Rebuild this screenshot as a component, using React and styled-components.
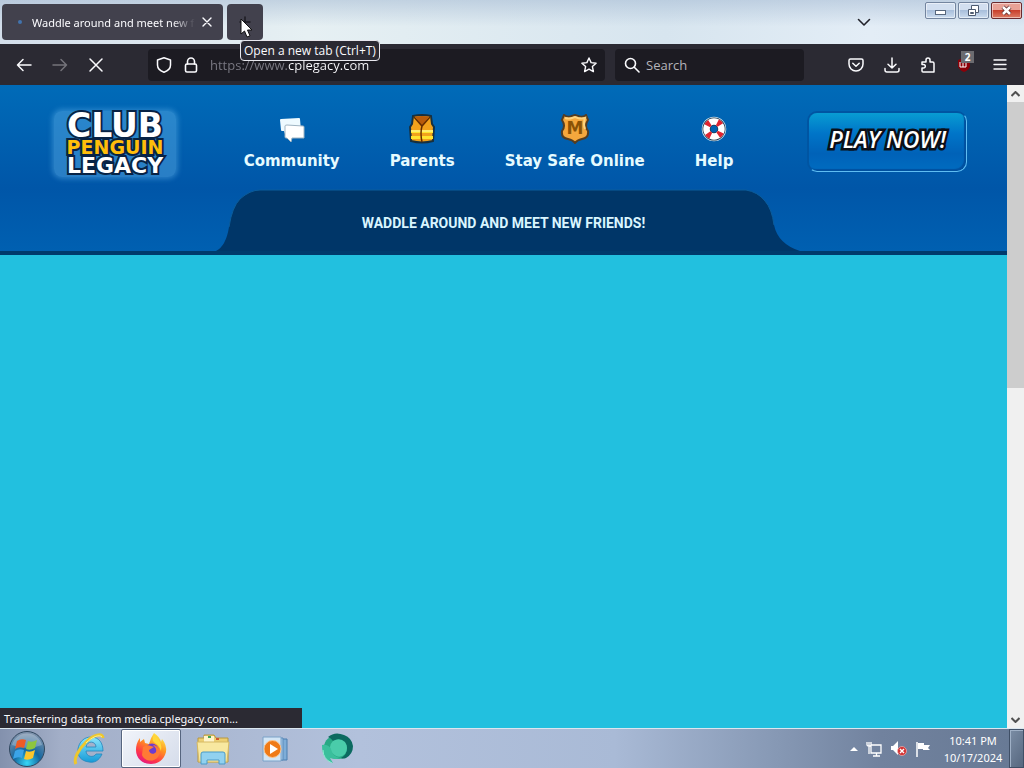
import styled, { createGlobalStyle } from 'styled-components';

const GlobalStyle = createGlobalStyle`
  * {
    box-sizing: border-box;
  }
  html,
  body,
  #root {
    height: 100%;
    margin: 0;
  }
  body {
    font-family: 'Noto Sans', 'Open Sans', sans-serif;
    font-size: 11px;
    overflow: hidden;
  }
  button {
    font: inherit;
    color: inherit;
    border: 0;
    padding: 0;
    background: none;
  }
  svg {
    display: block;
    flex: none;
  }
`;

const Desktop = styled.div`
  height: 100%;
  display: flex;
  flex-direction: column;
`;

/* title bar */
const TabStrip = styled.header`
  height: 44px;
  flex: none;
  display: flex;
  gap: 4px;
  padding: 4px 2px;
  background: linear-gradient(180deg, rgba(160, 182, 208, 0.5), rgba(255, 255, 255, 0) 60%),
    linear-gradient(90deg, #d3deeb, #e6f0f3 30%, #d7e5ef 65%, #e3edf6 85%, #dce8f3);
`;
const Tab = styled.div`
  width: 221px;
  height: 36px;
  display: flex;
  align-items: center;
  padding: 0 8px 0 16px;
  border-radius: 4px;
  background: #42414d;
  color: #fbfbfe;
`;
const TabTitle = styled.span`
  flex: 1;
  margin: 0 4px 0 10px;
  overflow: hidden;
  white-space: nowrap;
  mask-image: linear-gradient(90deg, #000 86%, transparent);
`;
const Loading = styled.span`
  width: 4px;
  height: 4px;
  border-radius: 50%;
  background: #4273ad;
`;
const NewTab = styled.div`
  position: relative;
  width: 36px;
  height: 36px;
  button {
    width: 100%;
    height: 100%;
    border-radius: 4px;
    background: #42414d;
    color: #1c1b22;
    display: flex;
    align-items: center;
    justify-content: center;
  }
`;
const Tooltip = styled.span`
  position: absolute;
  z-index: 3;
  left: 13px;
  top: 36px;
  padding: 0 3px;
  font-family: 'Open Sans', sans-serif;
  font-size: 12px;
  line-height: 19px;
  white-space: nowrap;
  color: #fbfbfe;
  background: #2b2a33;
  border: 1px solid #e8e8ee;
  border-radius: 4px;
`;
const Pointer = styled.svg`
  position: absolute;
  z-index: 4;
  left: 13px;
  top: 14px;
`;
const Spacer = styled.div`
  flex: 1;
`;
const ListTabs = styled.button`
  width: 32px;
  height: 36px;
  display: flex;
  align-items: center;
  justify-content: center;
  margin-right: 41px;
`;
const WindowControls = styled.div`
  display: flex;
  gap: 2px;
  margin-top: -2px;
`;
const WindowButton = styled.button`
  width: 31px;
  height: 17px;
  display: flex;
  align-items: center;
  justify-content: center;
  border: 1px solid ${(p) => (p.$close ? '#6b2a2e' : '#73859f')};
  border-radius: 2px;
  box-shadow: inset 0 0 0 1px rgba(255, 255, 255, 0.5);
  background: ${(p) =>
    p.$close
      ? 'linear-gradient(#e8a196 0 45%, #c9402c 50%, #dc7b63)'
      : 'linear-gradient(#d2dff0 0 45%, #a9bfdb 50%, #cbdcef)'};
`;

/* navigation bar */
const Toolbar = styled.div`
  height: 41px;
  flex: none;
  display: flex;
  align-items: center;
  padding: 0 6px;
  background: #2b2a33;
  color: #fbfbfe;
`;
const ToolButton = styled.button`
  width: 36px;
  height: 36px;
  display: flex;
  align-items: center;
  justify-content: center;
  opacity: ${(p) => (p.$dim ? 0.35 : 1)};
`;
const Field = styled.label`
  height: 32px;
  flex: ${(p) => p.$grow} 1 0;
  min-width: 0;
  display: flex;
  align-items: center;
  border-radius: 4px;
  background: #1c1b22;
  padding: ${(p) => p.$pad};
  gap: ${(p) => p.$gap};
  margin-left: ${(p) => p.$indent};
  input {
    flex: 1;
    min-width: 0;
    height: 24px;
    padding: 0;
    border: 0;
    outline: 0;
    font-family: 'Open Sans', sans-serif;
    font-size: 13px;
    color: #fbfbfe;
    background: none;
  }
  input::placeholder {
    color: #b4b4ba;
    opacity: 1;
  }
`;
const Address = styled.input`
  && {
    color: transparent;
    background: linear-gradient(90deg, #7b7a84 77px, #fbfbfe 77px);
    background-clip: text;
  }
`;
const ToolGroup = styled.div`
  display: flex;
  margin-left: 34px;
`;
const Badged = styled.span`
  position: relative;
`;
const Badge = styled.span`
  position: absolute;
  left: 5px;
  top: -6px;
  width: 13px;
  line-height: 12px;
  font-size: 10px;
  font-weight: 700;
  text-align: center;
  background: #6b6b70;
  color: #fff;
`;

/* page */
const Viewport = styled.div`
  position: relative;
  flex: 1;
  min-height: 0;
  display: flex;
`;
const Page = styled.main`
  flex: 1;
  min-width: 0;
  background: #22c0df;
`;
const SiteHeader = styled.div`
  height: 170px;
  display: flex;
  flex-direction: column;
  justify-content: space-between;
  background: linear-gradient(#006bb8, #0056a8 62%, #0060b1);
  border-bottom: 4px solid #003a6c;
`;
const SiteBar = styled.div`
  display: flex;
  align-items: flex-start;
  justify-content: space-between;
  padding: 26px 40px 0 54px;
`;
const Logo = styled.a`
  width: 122px;
  display: flex;
  flex-direction: column;
  align-items: center;
  padding: 2px 0;
  font-family: 'DejaVu Sans', sans-serif;
  font-weight: 700;
  text-decoration: none;
  border-radius: 8px;
  background: rgba(103, 185, 240, 0.4);
  box-shadow: 0 0 5px 2px rgba(103, 185, 240, 0.4);
`;
const LogoLine = styled.span`
  font-size: ${(p) => p.$size};
  line-height: ${(p) => p.$line};
  color: ${(p) => p.$color};
  -webkit-text-stroke: 4px #082345;
  paint-order: stroke fill;
`;
const Nav = styled.nav`
  display: flex;
  gap: 50px;
  margin-right: 6px;
`;
const NavLink = styled.a`
  display: flex;
  flex-direction: column;
  align-items: center;
  gap: 4px;
  padding-top: 2px;
  font-family: 'DejaVu Sans', sans-serif;
  font-size: 15px;
  font-weight: 700;
  line-height: 24px;
  color: #e6fbff;
  text-decoration: none;
  white-space: nowrap;
`;
const PlayButton = styled.button`
  width: 160px;
  height: 61px;
  padding-bottom: 6px;
  border: 2px solid #0055a2;
  border-right: 1px solid #5fbdf2;
  border-bottom: 1px solid #5fbdf2;
  border-radius: 10px;
  background: linear-gradient(#089cd2, #0075c8 35%, #0062b8 70%, #006cc0);
  box-shadow: inset -2px -2px 1px #00509f;
  font-family: 'Open Sans', sans-serif;
  font-size: 23px;
  font-weight: 600;
  font-style: italic;
  color: #fff;
  -webkit-text-stroke: 5px #0a0f18;
  paint-order: stroke fill;
`;
const Slogan = styled.div`
  position: relative;
  width: 584px;
  max-width: 100%;
  height: 62px;
  align-self: center;
  text-align: center;
  svg {
    position: absolute;
    inset: 0;
    width: 100%;
    height: 100%;
    overflow: visible;
  }
  h1 {
    position: relative;
    margin: 0;
    font-family: 'Roboto', sans-serif;
    font-size: 14px;
    font-weight: 700;
    line-height: 68px;
    color: #d9f5ff;
  }
`;
const ScrollBar = styled.div`
  width: 17px;
  display: flex;
  flex-direction: column;
  background: #f0f0f0;
  button {
    height: 17px;
    display: flex;
    align-items: center;
    justify-content: center;
  }
`;
const ScrollTrack = styled.div`
  flex: 1;
`;
const ScrollThumb = styled.div`
  height: 47%;
  background: #cdcdcd;
`;
const Status = styled.div`
  position: absolute;
  left: 0;
  bottom: 0;
  width: 302px;
  padding: 1px 4px 0;
  line-height: 19px;
  color: #fbfbfe;
  background: #2b2a33;
`;

/* taskbar */
const Taskbar = styled.footer`
  height: 40px;
  flex: none;
  display: flex;
  align-items: center;
  gap: 2px;
  border-top: 1px solid #dbe6ef;
  background: linear-gradient(90deg, #8391ad, #a3afc8 6%, #b2c1dc 35%, #a9bad6 60%, #8698b4 76%, #71829e 86%, #677994);
`;
const StartButton = styled.button`
  width: 57px;
  display: flex;
  justify-content: center;
  padding-right: 3px;
`;
const TaskButton = styled.button`
  width: 60px;
  height: 39px;
  display: flex;
  align-items: center;
  justify-content: center;
  border-radius: 2px;
  border: 1px solid ${(p) => (p.$active ? '#56657f' : 'transparent')};
  background: ${(p) => (p.$active ? 'linear-gradient(135deg, #f1f4fa, #d5dcea)' : 'none')};
  box-shadow: ${(p) => (p.$active ? 'inset 0 0 0 1px #fff' : 'none')};
`;
const Tray = styled.div`
  display: flex;
  align-items: center;
  gap: 8px;
`;
const Clock = styled.time`
  width: 68px;
  text-align: center;
  line-height: 17px;
  color: #fff;
`;
const ShowDesktop = styled.button`
  width: 15px;
  height: 39px;
  border: 1px solid #3f4f66;
  box-shadow: inset 1px 1px 0 #9fb0c6;
  background: linear-gradient(120deg, #7b8da5, #56677f);
`;

const Line = ({ size = 16, width = 2, children }) => (
  <svg
    width={size}
    height={size}
    viewBox="0 0 16 16"
    fill="none"
    stroke="currentColor"
    strokeWidth={width}
    strokeLinecap="round"
    strokeLinejoin="round"
  >
    {children}
  </svg>
);

const ChatIcon = () => (
  <svg width="26" height="26" viewBox="0 0 26 26">
    <path d="M2 3l18-1q1 0 1 1l1 12H9l-3 3-1-3H3q-1 0-1-1L1 4q0-1 1-1z" fill="#eefaff" />
    <path d="M8 9l16 1q1 0 1 1v11H13l-1 4-4-4H7q-1 0-1-1V10q0-1 2-1z" fill="#fff" stroke="#9fb4c2" />
  </svg>
);

const VestIcon = () => (
  <svg width="28" height="30" viewBox="0 0 28 30">
    <path
      d="M5 2q9-2 18 0l1 8 2 3-1 14q-11 3-22 0L2 13l2-3z"
      fill="#f2a21c"
      stroke="#17303f"
      strokeWidth="2"
    />
    <path d="M7 2.500q7-1 14 0L14 12z" fill="#b85b0b" />
    <path d="M3 16h22v3H3zM3 22h22v3H3z" fill="#ffe52e" />
    <path d="M3 17h22" stroke="#fff7b0" />
    <path d="M6 3l8 9 8-9M14 12q-2 7 0 16" fill="none" stroke="#652c00" strokeWidth="1.500" />
  </svg>
);

const BadgeIcon = () => (
  <svg width="30" height="30" viewBox="0 0 30 30">
    <path
      d="M4 1q4 3 8 1l3-1 3 1q4 2 8-1l2 5q-4 6 0 11 1 7-6 8-5 1-7 4-2-3-7-4-7-1-6-8 4-5 0-11z"
      fill="#f5a73d"
      stroke="#543d22"
      strokeWidth="2"
    />
    <path d="M5 4q4 1 7 0l3-1 3 1q4 1 7 0-2 6 0 11" fill="none" stroke="#ffd37d" strokeWidth="2" />
    <text x="15" y="20" textAnchor="middle" fontFamily="DejaVu Sans" fontWeight="700" fontSize="17" fill="#8b5205">
      M
    </text>
  </svg>
);

const LifebuoyIcon = () => (
  <svg width="26" height="26" viewBox="0 0 26 26">
    <circle cx="13" cy="13" r="11.500" fill="none" stroke="#d5eaf5" strokeWidth="1.500" />
    <circle cx="13" cy="13" r="7.500" fill="none" stroke="#20384c" strokeWidth="8" />
    <circle cx="13" cy="13" r="7.500" fill="none" stroke="#fff" strokeWidth="6.500" />
    <circle
      cx="13"
      cy="13"
      r="7.500"
      fill="none"
      stroke="#df2430"
      strokeWidth="6.500"
      strokeDasharray="4 7.780"
      transform="rotate(25 13 13)"
    />
  </svg>
);

const StartOrb = () => (
  <svg width="38" height="38" viewBox="0 0 38 38">
    <defs>
      <radialGradient id="orb" cx="50%" cy="90%" r="85%">
        <stop offset="0" stopColor="#37d8f7" />
        <stop offset=".45" stopColor="#1467a0" />
        <stop offset="1" stopColor="#7e93ad" />
      </radialGradient>
    </defs>
    <circle cx="19" cy="19" r="17.500" fill="url(#orb)" stroke="#31475e" />
    <path d="M4 15a15.500 15.500 0 0 1 30 0q-15 6-30 0z" fill="#fff" opacity=".25" />
    <path d="M9 11q4-3 9-1l-2 8q-5-2-9 1z" fill="#ee5b25" />
    <path d="M20 11q4 2 9-1l-2 8q-5 3-9 1z" fill="#8dc63f" />
    <path d="M7 21q4-3 9-1l-2 8q-4-2-9 1z" fill="#3ba4e8" />
    <path d="M18 21q4 2 9-1l-2 8q-5 3-9 1z" fill="#fdc62c" />
  </svg>
);

const ExplorerIcon = () => (
  <svg width="34" height="34" viewBox="0 0 34 34">
    <defs>
      <linearGradient id="ie" x2="0" y2="1">
        <stop offset="0" stopColor="#8be5fc" />
        <stop offset="1" stopColor="#159bd8" />
      </linearGradient>
    </defs>
    <path
      fillRule="evenodd"
      d="M19 5c8 0 12 6 12 14H14c0 6 8 7 10 3h6c-3 7-8 9-13 8C9 29 5 24 6 17S12 5 19 5zm-5 10h10c0-6-9-7-10 0z"
      fill="url(#ie)"
      stroke="#2386bd"
      strokeWidth=".8"
    />
    <path d="M31 6C31 0 21 3 14 10S1 27 4 32" fill="none" stroke="#efc72c" strokeWidth="3" />
    <path d="M30 5C27 2 20 5 14 11" fill="none" stroke="#fff08a" />
  </svg>
);

const FirefoxIcon = () => (
  <svg width="32" height="32" viewBox="0 0 32 32">
    <defs>
      <linearGradient id="fox" x1=".8" x2=".25" y2="1">
        <stop offset="0" stopColor="#fff44f" />
        <stop offset=".4" stopColor="#ff9520" />
        <stop offset=".75" stopColor="#ff3647" />
        <stop offset="1" stopColor="#e31587" />
      </linearGradient>
    </defs>
    <path
      d="M19 0q6 4 7 9l1-3q5 6 4 13c-2 8-8 12-15 12C7 31 1 25 1 17Q1 10 5 5v4l4-3 1 4 4 1q2-7 5-11z"
      fill="url(#fox)"
    />
    <circle cx="17" cy="17" r="6.500" fill="#6d3cd0" />
    <path d="M8 14q4-3 8-1l3 1-5 3c0 4 5 5 7 2 1-3-1-5-3-7 6 1 9 7 5 12-5 6-14 4-16-2z" fill="#ff7a35" />
    <path d="M19 2q9 7 7 16-2-6-6-8-4-3-1-8z" fill="#ffd83a" />
  </svg>
);

const FolderIcon = () => (
  <svg width="34" height="32" viewBox="0 0 34 32">
    <path d="M2 5h6V2h10l2 3h12v24H2z" fill="#edcf72" stroke="#b8983f" />
    <path d="M8 3h10v6H8z" fill="#fff4ca" />
    <path d="M12 3h3v2h-3z" fill="#3fa454" />
    <path d="M20 5h3v2h-3z" fill="#d05830" />
    <path d="M1 9h32l-2 20H3z" fill="#f8e8a0" stroke="#d5b964" />
    <path d="M5 31V21q0-2 2-2h20q2 0 2 2v10h-6v-4H11v4z" fill="#91d1ef" stroke="#4a9bc8" />
  </svg>
);

const MediaIcon = () => (
  <svg width="28" height="28" viewBox="0 0 28 28">
    <path d="M10 4h16v21H10z" fill="#7eadd8" stroke="#4c7eb0" />
    <path d="M6 3h16v22H6z" fill="#a4c8e8" stroke="#5a8bba" />
    <path d="M2 2h18v24H2z" fill="#d2e5f5" stroke="#7aa2c8" />
    <circle cx="11.500" cy="14" r="8.500" fill="#ef7a17" stroke="#fbc38c" />
    <path d="M9 9l8 5-8 5z" fill="#fff" />
  </svg>
);

const GlobeIcon = () => (
  <svg width="34" height="34" viewBox="0 0 34 34">
    <ellipse cx="18" cy="15" rx="14" ry="12" fill="#27a884" />
    <path d="M8 5Q15-1 24 3q8 3 9 11 0 8-7 12-3 1-5 0 6-3 6-10 0-5-5-7-4-3-9 0-2-3-5-4z" fill="#0c6a60" />
    <path d="M13 9q7-4 12 1 4 6 0 12-4 4-9 2-6-3-6-9 0-3 3-6z" fill="#4accaa" />
    <path d="M2 13q6-1 9 4 1 7 9 9-4 2-10 0l3 5Q2 28 2 13z" fill="#3abf9c" />
    <path d="M3 18q0 9 9 13" fill="none" stroke="#8debd0" />
  </svg>
);

const tasks = [
  { label: 'Internet Explorer', Icon: ExplorerIcon },
  { label: 'Firefox', Icon: FirefoxIcon, active: true },
  { label: 'Windows Explorer', Icon: FolderIcon },
  { label: 'Media Player', Icon: MediaIcon },
  { label: 'Globe', Icon: GlobeIcon },
];

const links = [
  { label: 'Community', Icon: ChatIcon },
  { label: 'Parents', Icon: VestIcon },
  { label: 'Stay Safe Online', Icon: BadgeIcon },
  { label: 'Help', Icon: LifebuoyIcon },
];

const IconBox = styled.span`
  height: 32px;
  display: flex;
  align-items: center;
`;

const TitleBar = () => (
  <TabStrip>
    <Tab>
      <Loading />
      <TabTitle>Waddle around and meet new friends</TabTitle>
      <button aria-label="Close tab">
        <Line width={1.4}>
          <path d="M4 4l8 8M12 4l-8 8" />
        </Line>
      </button>
    </Tab>
    <NewTab>
      <button aria-label="New tab">
        <Line width={1.5}>
          <path d="M8 3v10M3 8h10" />
        </Line>
      </button>
      <Tooltip role="tooltip">Open a new tab (Ctrl+T)</Tooltip>
      <Pointer width="13" height="20" viewBox="0 0 13 20">
        <path d="M1 1v15l3.500-3 2.500 6 3-1.200-2.500-5.800H12z" fill="#fff" stroke="#111" />
      </Pointer>
    </NewTab>
    <Spacer />
    <ListTabs aria-label="List all tabs">
      <Line width={1.6}>
        <path d="M2.500 5.500L8 11l5.500-5.500" stroke="#22222a" />
      </Line>
    </ListTabs>
    <WindowControls>
      <WindowButton aria-label="Minimize">
        <svg width="13" height="9">
          <rect x="1.500" y="4.500" width="10" height="4" fill="#fff" stroke="#58677c" />
        </svg>
      </WindowButton>
      <WindowButton aria-label="Restore">
        <svg width="13" height="12" fill="#fff" stroke="#4d5b70">
          <path d="M4.500 .5h7v7h-7z" />
          <path d="M1.500 4.500h7v6h-7z" />
          <path d="M3.500 7.500h3v1h-3z" />
        </svg>
      </WindowButton>
      <WindowButton $close aria-label="Close">
        <svg width="13" height="11" viewBox="0 0 13 11">
          <path d="M3 2l7 7M10 2L3 9" stroke="#5e2c2c" strokeWidth="4" />
          <path d="M3 2l7 7M10 2L3 9" stroke="#fff" strokeWidth="2.500" />
        </svg>
      </WindowButton>
    </WindowControls>
  </TabStrip>
);

const NavigationBar = () => (
  <Toolbar>
    <ToolButton aria-label="Back">
      <Line width={1.5}>
        <path d="M15 8H1.500M7 2.500L1.500 8 7 13.500" />
      </Line>
    </ToolButton>
    <ToolButton $dim aria-label="Forward">
      <Line width={1.5}>
        <path d="M1 8h13.500M9 2.500L14.500 8 9 13.500" />
      </Line>
    </ToolButton>
    <ToolButton aria-label="Stop">
      <Line width={1.5}>
        <path d="M2 2l12 12M14 2L2 14" />
      </Line>
    </ToolButton>
    <Field $grow={441} $pad="0 8px" $gap="11px" $indent="34px">
      <Line width={1.5}>
        <path d="M8 .8L1.500 3v5q0 5 6.500 7.200 6.500-2.200 6.500-7.200V3z" />
      </Line>
      <Line width={1.6}>
        <rect x="2.500" y="7" width="11" height="8" rx="1.500" />
        <path d="M4.500 7V4.500a3.500 3.500 0 0 1 7 0V7" />
      </Line>
      <Address aria-label="Address" defaultValue="https://www.cplegacy.com" />
      <Line width={1.4}>
        <path d="M8 1l2.100 4.600 5 .6-3.700 3.400 1 5L8 12.200l-4.400 2.400 1-5L.9 6.200l5-.6z" />
      </Line>
    </Field>
    <Field $grow={171} $pad="0 9px" $gap="6px" $indent="10px">
      <Line width={1.6}>
        <circle cx="6.500" cy="6.500" r="5" />
        <path d="M10.300 10.300L15 15" />
      </Line>
      <input aria-label="Search" placeholder="Search" />
    </Field>
    <ToolGroup>
      <ToolButton aria-label="Pocket">
        <Line width={1.5}>
          <path d="M2.500 2h11Q15 2 15 3.500V7A7 7 0 0 1 1 7V3.500Q1 2 2.500 2zM4.800 6.200L8 9.300l3.200-3.100" />
        </Line>
      </ToolButton>
      <ToolButton aria-label="Downloads">
        <Line width={1.5}>
          <path d="M8 1v10M4 7.200L8 11l4-3.800M1 11.500V13q0 2 2 2h10q2 0 2-2v-1.500" />
        </Line>
      </ToolButton>
      <ToolButton aria-label="Extensions">
        <Line width={1.5}>
          <path d="M2 5h4V3a2 2 0 0 1 4 0v2h2.500Q14 5 14 6.500V15H3q-1 0-1-1v-3h1.500a1.800 1.800 0 0 0 0-3.600H2z" />
        </Line>
      </ToolButton>
      <ToolButton aria-label="Ad blocker">
        <Badged>
          <svg width="16" height="16" viewBox="0 0 16 16">
            <path d="M8 1l6 2v6q-1 4-6 6-5-2-6-6V3z" fill="#8b0008" />
            <path d="M4 5v5h6V6M7 6v4" fill="none" stroke="#fff" />
          </svg>
          <Badge>2</Badge>
        </Badged>
      </ToolButton>
      <ToolButton aria-label="Menu">
        <Line width={1.4}>
          <path d="M2 3h12M2 7.500h12M2 12h12" />
        </Line>
      </ToolButton>
    </ToolGroup>
  </Toolbar>
);

const Site = () => (
  <Page>
    <SiteHeader>
      <SiteBar>
        <Logo href="#home">
          <LogoLine $size="33px" $line="26px" $color="#fff">
            CLUB
          </LogoLine>
          <LogoLine $size="19px" $line="17px" $color="#ffbe0a">
            PENGUIN
          </LogoLine>
          <LogoLine $size="22px" $line="19px" $color="#fff">
            LEGACY
          </LogoLine>
        </Logo>
        <Nav>
          {links.map(({ label, Icon }) => (
            <NavLink href="#" key={label}>
              <IconBox>
                <Icon />
              </IconBox>
              {label}
            </NavLink>
          ))}
        </Nav>
        <PlayButton>PLAY NOW!</PlayButton>
      </SiteBar>
      <Slogan>
        <svg viewBox="0 0 584 62" preserveAspectRatio="none">
          <path
            d="M4 62Q14 57 17 38 20 18 28 10 38 1 48 1H534Q546 3 553 12 560 20 562 36 566 55 588 62z"
            fill="#003668"
          />
          <path d="M17 38Q20 18 28 10 38 1 48 1H534Q546 3 553 12 560 20 562 36" fill="none" stroke="#0b5d9c" />
        </svg>
        <h1>WADDLE AROUND AND MEET NEW FRIENDS!</h1>
      </Slogan>
    </SiteHeader>
  </Page>
);

const Arrow = ({ d }) => (
  <svg width="9" height="6" viewBox="0 0 9 6">
    <path d={d} fill="none" stroke="#505050" strokeWidth="2" />
  </svg>
);

export default function App() {
  return (
    <Desktop>
      <GlobalStyle />
      <TitleBar />
      <NavigationBar />
      <Viewport>
        <Site />
        <ScrollBar>
          <button aria-label="Scroll up">
            <Arrow d="M.5 5l4-4 4 4" />
          </button>
          <ScrollTrack>
            <ScrollThumb />
          </ScrollTrack>
          <button aria-label="Scroll down">
            <Arrow d="M.5 1l4 4 4-4" />
          </button>
        </ScrollBar>
        <Status>Transferring data from media.cplegacy.com...</Status>
      </Viewport>
      <Taskbar>
        <StartButton aria-label="Start">
          <StartOrb />
        </StartButton>
        {tasks.map(({ label, Icon, active }) => (
          <TaskButton key={label} aria-label={label} $active={active}>
            <Icon />
          </TaskButton>
        ))}
        <Spacer />
        <Tray>
          <svg width="8" height="16">
            <path d="M0 10l4-4 4 4z" fill="#fff" />
          </svg>
          <svg width="16" height="16" viewBox="0 0 16 16" fill="none" stroke="#fff" strokeWidth="1.300">
            <path d="M5 4h10v8H5zM7 15h7M10.500 12v3M1 1v3q0 1 2 1t2-1V1M3 1v4M3 5v8" />
          </svg>
          <svg width="17" height="17" viewBox="0 0 17 17">
            <path d="M1 6h2l5-5v14l-5-5H1z" fill="#fff" />
            <circle cx="12" cy="11" r="4.500" fill="#d23232" stroke="#f3b6b6" strokeWidth=".7" />
            <path d="M10 9l4 4M14 9l-4 4" stroke="#fff" strokeWidth="1.400" />
          </svg>
          <svg width="16" height="16" viewBox="0 0 16 16">
            <path d="M2 1v15" stroke="#fff" strokeWidth="1.500" />
            <path d="M3 2h6v2h6l-2 3 2 2H8V8H3z" fill="#fff" />
          </svg>
          <Clock>
            10:41 PM
            <br />
            10/17/2024
          </Clock>
        </Tray>
        <ShowDesktop aria-label="Show desktop" />
      </Taskbar>
    </Desktop>
  );
}
